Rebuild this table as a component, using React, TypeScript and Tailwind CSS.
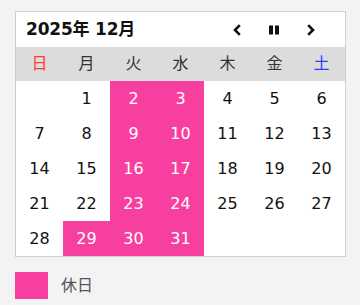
import React from "react";

const PINK = "bg-[#f73f9f]";

type Cell = { d?: number; off?: boolean };

const weeks: Cell[][] = [
  [{}, { d: 1 }, { d: 2, off: true }, { d: 3, off: true }, { d: 4 }, { d: 5 }, { d: 6 }],
  [{ d: 7 }, { d: 8 }, { d: 9, off: true }, { d: 10, off: true }, { d: 11 }, { d: 12 }, { d: 13 }],
  [{ d: 14 }, { d: 15 }, { d: 16, off: true }, { d: 17, off: true }, { d: 18 }, { d: 19 }, { d: 20 }],
  [{ d: 21 }, { d: 22 }, { d: 23, off: true }, { d: 24, off: true }, { d: 25 }, { d: 26 }, { d: 27 }],
  [{ d: 28 }, { d: 29, off: true }, { d: 30, off: true }, { d: 31, off: true }, {}, {}, {}],
];

const days = ["日", "月", "火", "水", "木", "金", "土"];

function ChevronLeft() {
  return (
    <svg width="12" height="14" viewBox="0 0 12 14">
      <path d="M8.8 2.2 L4 7 L8.8 11.8" fill="none" stroke="#111" strokeWidth="2.6" strokeLinejoin="miter" />
    </svg>
  );
}

function ChevronRight() {
  return (
    <svg width="12" height="14" viewBox="0 0 12 14">
      <path d="M3.2 2.2 L8 7 L3.2 11.8" fill="none" stroke="#111" strokeWidth="2.6" strokeLinejoin="miter" />
    </svg>
  );
}

function Pause() {
  return (
    <svg width="12" height="12" viewBox="0 0 12 12">
      <rect x="1" y="1.5" width="4" height="9" fill="#111" />
      <rect x="7" y="1.5" width="4" height="9" fill="#111" />
    </svg>
  );
}

export default function App() {
  return (
    <div
      className="w-[360px] h-[305px] bg-[#f3f3f3] pt-[11px] pl-[15px]"
      style={{ fontFamily: '"DejaVu Sans", "Noto Sans CJK JP", sans-serif' }}
    >
      <div className="w-[331px] border border-[#cfcfcf] bg-white">
        <div className="h-[35px] flex items-center pl-[10px]">
          <div className="text-[17px] font-bold text-[#111] tracking-[-0.2px]">2025年 12月</div>
          <div className="flex items-center ml-auto mr-[28px]">
            <button className="w-[12px] flex justify-center"><ChevronLeft /></button>
            <button className="w-[12px] flex justify-center ml-[25px]"><Pause /></button>
            <button className="w-[12px] flex justify-center ml-[25px]"><ChevronRight /></button>
          </div>
        </div>
        <div className="grid grid-cols-7 h-[34px] bg-[#dcdcdc] items-center text-[16px]">
          {days.map((d, i) => (
            <div
              key={d}
              className={
                "text-center " +
                (i === 0 ? "text-[#ff3b3b]" : i === 6 ? "text-[#3535ff]" : "text-[#333]")
              }
            >
              {d}
            </div>
          ))}
        </div>
        <div className="grid grid-cols-7">
          {weeks.flat().map((c, i) => (
            <div
              key={i}
              className={
                "h-[35px] flex items-center justify-center text-[16px] " +
                (c.off ? PINK + " text-white" : "text-[#111]")
              }
            >
              {c.d ?? ""}
            </div>
          ))}
        </div>
      </div>
      <div className="flex items-center mt-[15px]">
        <div className={"w-[33px] h-[27px] " + PINK}></div>
        <div className="ml-[13px] text-[16px] text-[#555]">休日</div>
      </div>
    </div>
  );
}
